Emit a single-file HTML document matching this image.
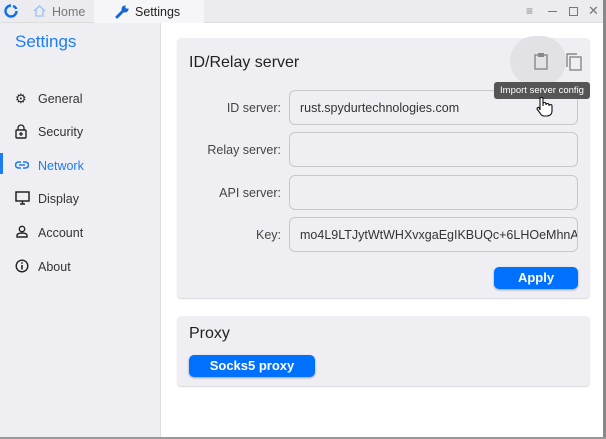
<!DOCTYPE html>
<html><head><style>
*{box-sizing:border-box;margin:0;padding:0}
body{width:606px;height:439px;overflow:hidden;background:#fff;font-family:"Liberation Sans",sans-serif;position:relative;color:#333}
.a{position:absolute}
.title{left:0;top:0;width:606px;height:23px;background:#ececf0;border-bottom:1px solid #ddd}
.side{left:0;top:23px;width:161px;height:416px;background:#efeff3;border-right:1px solid #ddd}
.nav{left:38px;font-size:12.5px;color:#333}
.card{background:#efeff3;border-radius:4px;box-shadow:0 1px 1px #d8d8dc}
.lbl{font-size:12.5px;color:#444;text-align:right;width:105px;left:176px}
.in{left:289px;width:289px;height:35px;border:1px solid #c8c8cc;border-radius:6px;font-size:12.5px;padding:10px 0 0 10px;color:#333;white-space:nowrap;overflow:hidden}
.btn{background:#0071ff;color:#fff;font-weight:bold;font-size:13px;text-align:center;border-radius:5px;box-shadow:0 1px 2px #99b}
</style></head><body>
<div class="a title"></div>
<svg class="a" style="left:4px;top:4px" width="14" height="14" viewBox="0 0 14 14"><path d="M7 1.5A5.5 5.5 0 1 0 12.5 7" fill="none" stroke="#0b6ff0" stroke-width="2.4"/><path d="M9 2a5 5 0 0 1 3.3 3" fill="none" stroke="#0b6ff0" stroke-width="2.4"/></svg>
<svg class="a" style="left:33px;top:5px" width="13" height="12" viewBox="0 0 13 12"><path d="M1 6L6.5 1 12 6M3 5v6h7V5" fill="none" stroke="#9bc0ee" stroke-width="1.3"/></svg>
<div class="a" style="left:52px;top:5px;font-size:12.5px;color:#777">Home</div>
<div class="a" style="left:94px;top:0;width:110px;height:23px;background:#f6f6f8"></div>
<svg class="a" style="left:115px;top:4px" width="15" height="15" viewBox="0 0 15 15"><path d="M2 13L8 7" stroke="#1767d6" stroke-width="3" stroke-linecap="round"/><circle cx="10" cy="5" r="3.5" fill="#1767d6"/><circle cx="12" cy="3" r="1.6" fill="#f6f6f8"/></svg>
<div class="a" style="left:135px;top:5px;font-size:12.5px;color:#222">Settings</div>
<div class="a" style="left:526px;top:4px;font-size:12px;color:#888">≡</div>
<div class="a" style="left:548px;top:11px;width:9px;height:1px;background:#777"></div>
<div class="a" style="left:569px;top:7px;width:9px;height:9px;border:1px solid #777"></div>
<div class="a" style="left:588px;top:3px;font-size:13px;color:#777">✕</div>
<div class="a side"></div>
<div class="a" style="left:15px;top:32px;font-size:17px;color:#1d7cf2">Settings</div>
<div class="a" style="left:0;top:153px;width:3px;height:21px;background:#1d7cf2"></div>
<div class="a" style="left:15px;top:91px;font-size:13px;color:#222">⚙</div>
<div class="a nav" style="top:92px">General</div>
<svg class="a" style="left:15px;top:124px" width="12" height="15" viewBox="0 0 12 15"><rect x="1" y="6" width="10" height="8" rx="1" fill="none" stroke="#222" stroke-width="1.4"/><path d="M3 6V4a3 3 0 0 1 6 0v2M6 8v4M4 10h4" fill="none" stroke="#222" stroke-width="1.3"/></svg>
<div class="a nav" style="top:125px">Security</div>
<svg class="a" style="left:15px;top:161px" width="14" height="8" viewBox="0 0 14 8"><path d="M6 1H3.5a3 3 0 0 0 0 6H6M8 1h2.5a3 3 0 0 1 0 6H8M4 4h6" fill="none" stroke="#1d7cf2" stroke-width="1.6"/></svg>
<div class="a nav" style="top:159px;color:#1d7cf2">Network</div>
<svg class="a" style="left:15px;top:191px" width="15" height="14" viewBox="0 0 15 14"><rect x="1" y="1" width="13" height="9" fill="none" stroke="#222" stroke-width="1.5"/><path d="M7.5 10v3M5 13h5" stroke="#222" stroke-width="1.5"/></svg>
<div class="a nav" style="top:192px">Display</div>
<svg class="a" style="left:16px;top:225px" width="12" height="13" viewBox="0 0 12 13"><circle cx="6" cy="4" r="2.7" fill="none" stroke="#222" stroke-width="1.4"/><path d="M1 12h10V10.5C11 9 9 8 6 8S1 9 1 10.5z" fill="none" stroke="#222" stroke-width="1.4"/></svg>
<div class="a nav" style="top:226px">Account</div>
<svg class="a" style="left:15px;top:259px" width="14" height="14" viewBox="0 0 14 14"><circle cx="7" cy="7" r="5.8" fill="none" stroke="#222" stroke-width="1.4"/><path d="M7 6v4.5" stroke="#222" stroke-width="1.6"/><circle cx="7" cy="4" r="0.9" fill="#222"/></svg>
<div class="a nav" style="top:260px">About</div>

<div class="a card" style="left:177px;top:38px;width:413px;height:260px"></div>
<div class="a" style="left:510px;top:36px;width:56px;height:50px;border-radius:28px;background:#e2e2e6"></div>
<div class="a" style="left:189px;top:54px;font-size:16px;color:#222">ID/Relay server</div>
<svg class="a" style="left:533px;top:52px" width="16" height="18" viewBox="0 0 16 18"><rect x="2" y="3" width="12" height="14" fill="none" stroke="#888" stroke-width="1.4"/><rect x="5" y="1" width="6" height="4" fill="#888"/></svg>
<svg class="a" style="left:565px;top:53px" width="18" height="18" viewBox="0 0 18 18"><rect x="5" y="4" width="11" height="13" fill="none" stroke="#888" stroke-width="1.4"/><path d="M2 14V1h10" fill="none" stroke="#888" stroke-width="1.4"/></svg>
<div class="a lbl" style="top:101px">ID server:</div>
<div class="a in" style="top:90px">rust.spydurtechnologies.com</div>
<div class="a lbl" style="top:143px">Relay server:</div>
<div class="a in" style="top:132px"></div>
<div class="a lbl" style="top:186px">API server:</div>
<div class="a in" style="top:175px"></div>
<div class="a lbl" style="top:228px">Key:</div>
<div class="a in" style="top:217px">mo4L9LTJytWtWHXvxgaEgIKBUQc+6LHOeMhnA</div>
<div class="a btn" style="left:494px;top:267px;width:84px;height:22px;line-height:22px">Apply</div>
<div class="a" style="left:494px;top:82px;width:96px;height:17px;background:#555;border-radius:3px;color:#fff;font-size:9.5px;line-height:17px;text-align:center">Import server config</div>
<svg class="a" style="left:535px;top:96px" width="18" height="22" viewBox="0 0 18 22"><path d="M5 14V3a1.5 1.5 0 0 1 3 0v7l0-2a1.5 1.5 0 0 1 3 0v1a1.5 1.5 0 0 1 3 0v1a1.5 1.5 0 0 1 3 0v5c0 3-2 5-5 5H9c-2 0-3-1-4-3L2 13a1.4 1.4 0 0 1 2-1.5z" fill="#fff" stroke="#111" stroke-width="1.1"/></svg>

<div class="a card" style="left:177px;top:316px;width:413px;height:70px"></div>
<div class="a" style="left:189px;top:325px;font-size:16px;color:#222">Proxy</div>
<div class="a btn" style="left:189px;top:355px;width:126px;height:22px;line-height:22px">Socks5 proxy</div>
<div class="a" style="left:603px;top:0;width:3px;height:439px;background:#888"></div>
<div class="a" style="left:0;top:437px;width:606px;height:2px;background:#999"></div>
</body></html>
